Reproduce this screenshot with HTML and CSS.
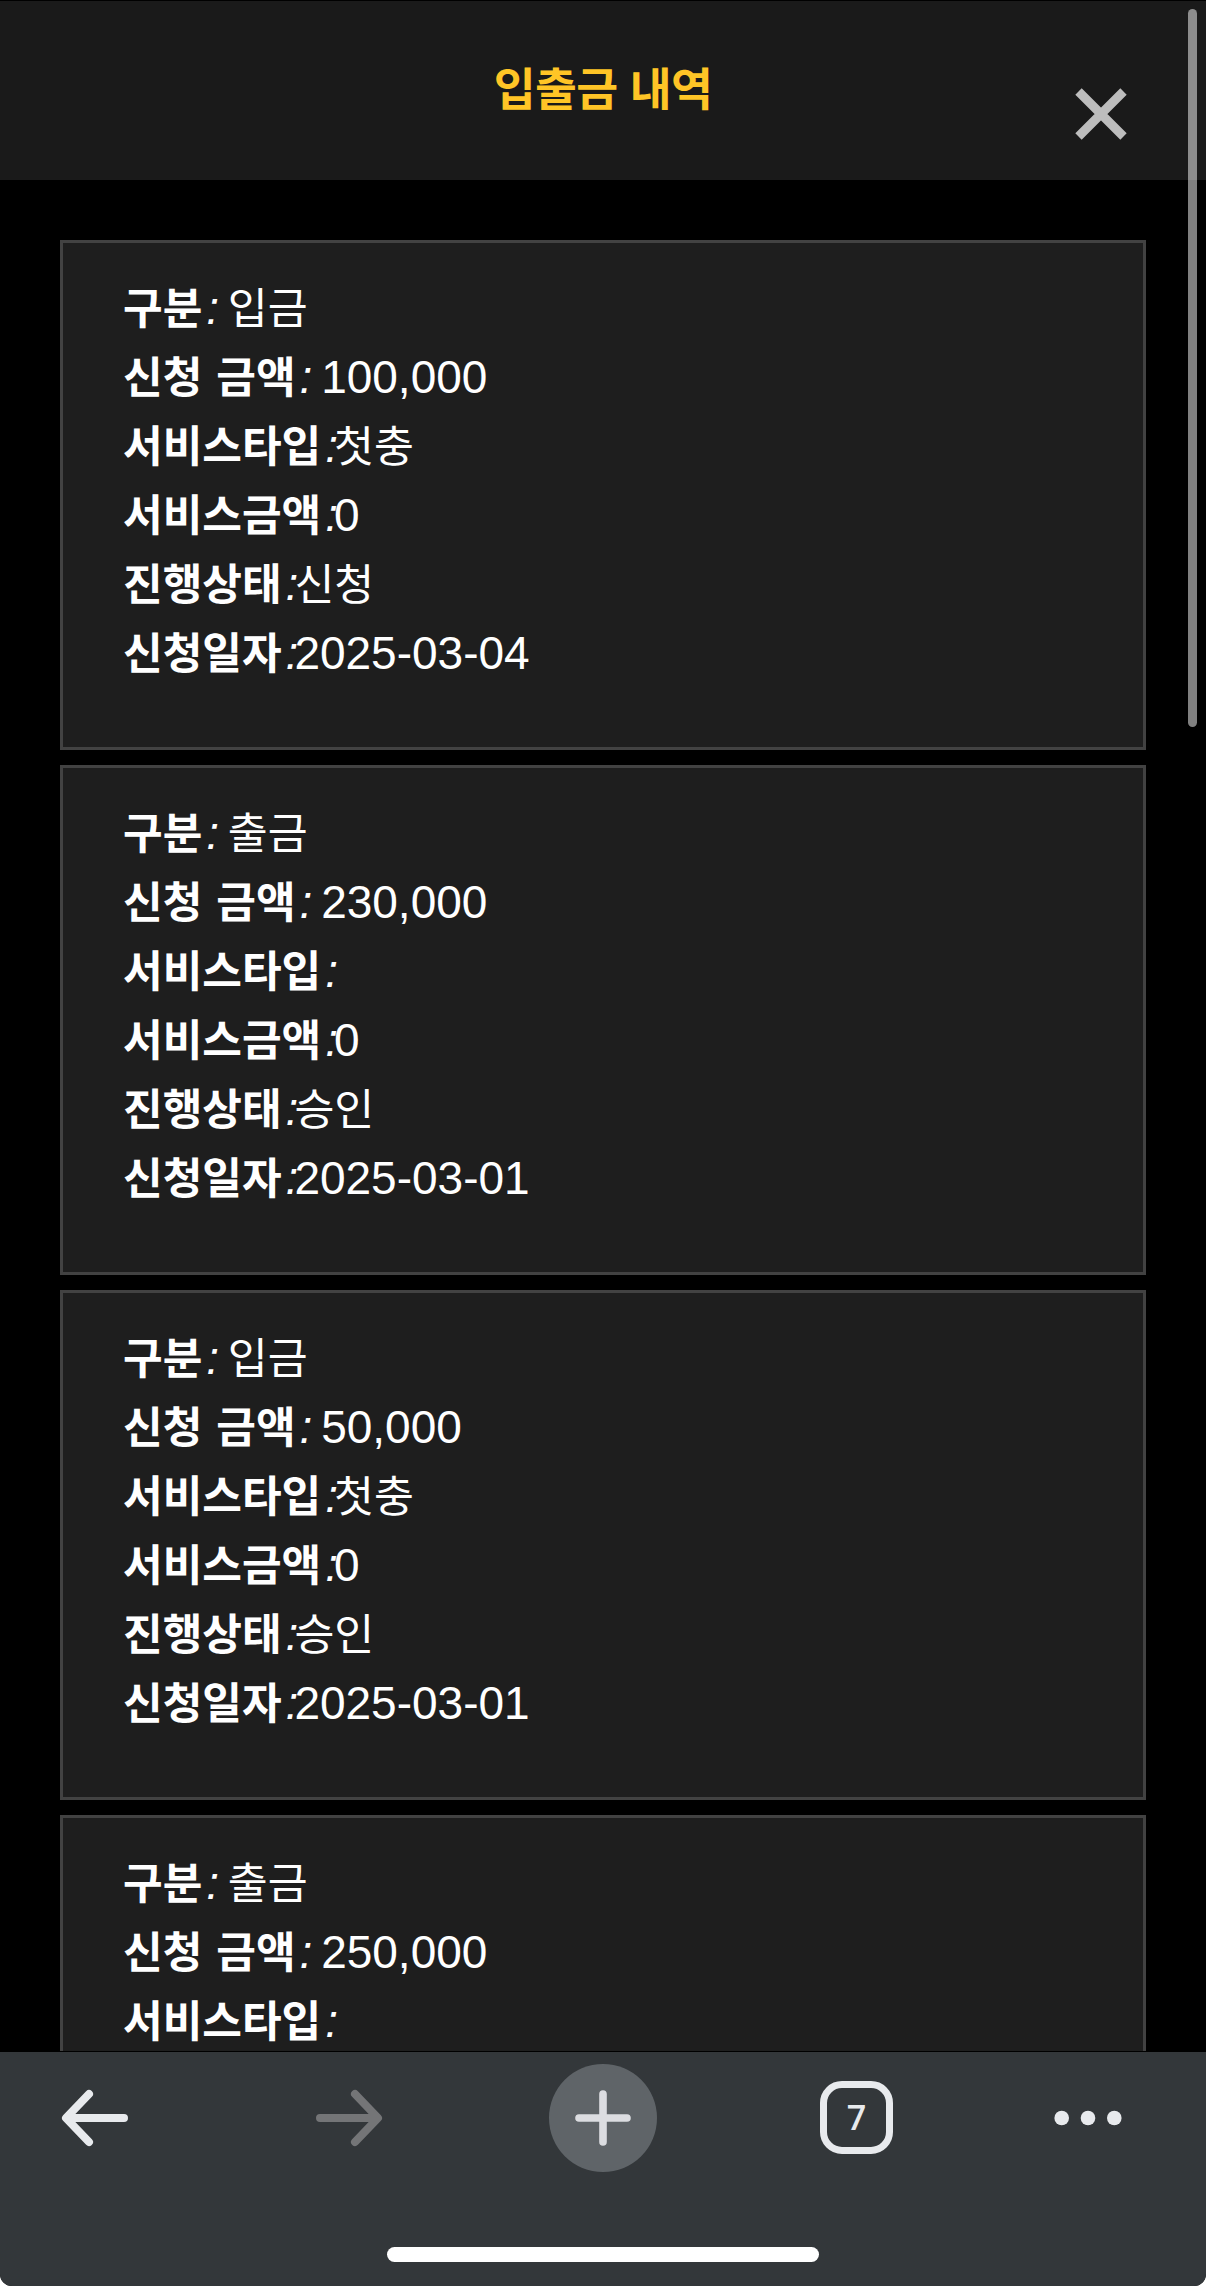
FILE: index.html
```html
<!DOCTYPE html>
<html lang="ko">
<head>
    <meta charset="UTF-8">
    <meta name="viewport" content="width=device-width, initial-scale=1.0">
    <title>입출금 내역</title>
    <link rel="stylesheet" href="styles.css">
</head>
<body>
    <div class="screen">
        <header class="header">
            <h1 class="header-title">입출금 내역</h1>
            <button type="button" class="header-close">
                <svg width="52" height="52" viewBox="0 0 52 52" stroke="#bdbdbd" stroke-width="9">
                    <path d="M3.5 3.5l45 45M48.5 3.5l-45 45"/>
                </svg>
            </button>
        </header>
        <main class="history-list">
            <ul class="history-item">
                <li><b>구분</b><i>:</i> <span>입금</span></li>
                <li><b>신청 금액</b><i>:</i> <span class="num">100,000</span></li>
                <li><b>서비스타입</b><i>:</i><span>첫충</span></li>
                <li><b>서비스금액</b><i>:</i><span class="num">0</span></li>
                <li><b>진행상태</b><i>:</i><span>신청</span></li>
                <li><b>신청일자</b><i>:</i><span class="num">2025-03-04</span></li>
            </ul>
            <ul class="history-item">
                <li><b>구분</b><i>:</i> <span>출금</span></li>
                <li><b>신청 금액</b><i>:</i> <span class="num">230,000</span></li>
                <li><b>서비스타입</b><i>:</i></li>
                <li><b>서비스금액</b><i>:</i><span class="num">0</span></li>
                <li><b>진행상태</b><i>:</i><span>승인</span></li>
                <li><b>신청일자</b><i>:</i><span class="num">2025-03-01</span></li>
            </ul>
            <ul class="history-item">
                <li><b>구분</b><i>:</i> <span>입금</span></li>
                <li><b>신청 금액</b><i>:</i> <span class="num">50,000</span></li>
                <li><b>서비스타입</b><i>:</i><span>첫충</span></li>
                <li><b>서비스금액</b><i>:</i><span class="num">0</span></li>
                <li><b>진행상태</b><i>:</i><span>승인</span></li>
                <li><b>신청일자</b><i>:</i><span class="num">2025-03-01</span></li>
            </ul>
            <ul class="history-item">
                <li><b>구분</b><i>:</i> <span>출금</span></li>
                <li><b>신청 금액</b><i>:</i> <span class="num">250,000</span></li>
                <li><b>서비스타입</b><i>:</i></li>
            </ul>
        </main>
        <div class="scrollbar"></div>
        <nav class="toolbar">
            <div class="toolbar-buttons">
                <button type="button">
                    <svg width="68" height="58" viewBox="0 0 68 58" stroke="#e8eaed" stroke-width="8" stroke-linecap="round" stroke-linejoin="round">
                        <path d="M63 29H6M28 5L5 29l23 24"/>
                    </svg>
                </button>
                <button type="button">
                    <svg width="68" height="58" viewBox="0 0 68 58" stroke="#747577" stroke-width="8" stroke-linecap="round" stroke-linejoin="round">
                        <path d="M5 29h57M40 5l23 24-23 24"/>
                    </svg>
                </button>
                <button type="button" class="new-tab">
                    <svg width="56" height="56" viewBox="0 0 56 56" stroke="#dcdde1" stroke-width="7.6" stroke-linecap="round">
                        <path d="M4 28h48M28 4v48"/>
                    </svg>
                </button>
                <button type="button" class="tab-count">7</button>
                <button type="button">
                    <svg class="dots" width="68" height="16" viewBox="0 0 68 16">
                        <circle cx="7.7" cy="8" r="7.3"/>
                        <circle cx="34" cy="8" r="7.3"/>
                        <circle cx="60.3" cy="8" r="7.3"/>
                    </svg>
                </button>
            </div>
            <div class="home-bar"></div>
        </nav>
    </div>
</body>
</html>
```
FILE: styles.css
```css
* {
    padding: 0;
    margin: 0;
    box-sizing: border-box;
}
body {
    background: #fff;
    font-family: "Liberation Sans", "Noto Sans CJK KR", sans-serif;
}
ul {
    list-style: none;
}
button {
    border: 0;
    background: none;
    font-family: inherit;
}
svg {
    display: block;
    fill: none;
}
.screen {
    position: relative;
    display: flex;
    flex-direction: column;
    height: 2286px;
    overflow: hidden;
    background: #000;
    border-radius: 0 0 12px 12px;
}
.header {
    position: relative;
    height: 180px;
    flex-shrink: 0;
    border-top: 1px solid #000;
    background: #1a1a1a;
    text-align: center;
}
.header-title {
    padding-top: 55px;
    color: #ffc526;
    font-size: 45.5px;
    line-height: 69px;
    letter-spacing: -0.6px;
}
.header-close {
    position: absolute;
    top: 87px;
    right: 79px;
}
.history-list {
    flex: 1;
    min-height: 0;
    padding: 60px 60px 0;
    overflow: hidden;
    border-bottom: 1px solid #000;
}
.history-item {
    height: 510px;
    margin-bottom: 15px;
    padding: 30px 60px;
    border: 3px solid #424242;
    background: #1e1e1e;
    color: #fff;
    font-size: 46px;
}
.history-item li {
    height: 69px;
    line-height: 70px;
    white-space: nowrap;
}
.history-item b {
    font-size: 43.1px;
    word-spacing: 2px;
}
.history-item i {
    margin-left: 4px;
    margin-right: -4px;
}
.history-item span {
    font-size: 43.4px;
}
.history-item .num {
    font-size: 46px;
}
.scrollbar {
    position: absolute;
    top: 9px;
    right: 9px;
    width: 9px;
    height: 718px;
    border-radius: 5px;
    background: rgba(255, 255, 255, 0.5);
}
.toolbar {
    height: 234px;
    flex-shrink: 0;
    padding-top: 11px;
    background: #33373a;
}
.toolbar-buttons {
    display: grid;
    grid-template-columns: 190px 318px 190px 317px 146px;
    align-items: center;
    justify-items: center;
    height: 109px;
}
.new-tab {
    display: flex;
    align-items: center;
    justify-content: center;
    width: 108px;
    height: 108px;
    border-radius: 50%;
    background: #5f6468;
}
.tab-count {
    width: 73px;
    height: 73px;
    border: 7px solid #e8eaed;
    border-radius: 22px;
    color: #e8eaed;
    font-family: "Open Sans", sans-serif;
    font-size: 34px;
    font-weight: 600;
    line-height: 59px;
}
.dots {
    fill: #e8eaed;
}
.home-bar {
    width: 432px;
    height: 15px;
    margin: 75px auto 0;
    border-radius: 8px;
    background: #fff;
}
```
